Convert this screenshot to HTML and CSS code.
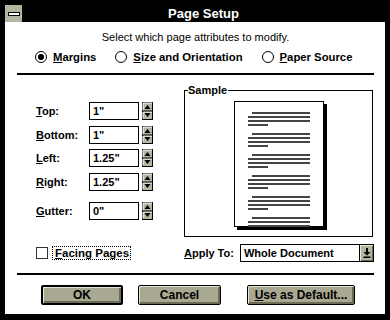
FILE: index.html
```html
<!DOCTYPE html>
<html>
<head>
<meta charset="utf-8">
<link rel="stylesheet" href="styles.css">
</head>
<body>
<div class="win">
  <div class="titlebar">
    <div class="sysmenu"><span class="sysbar"></span></div>
    <div class="title">Page Setup</div>
  </div>
  <div class="client">
    <p class="intro">Select which page attributes to modify.</p>
    <div class="radios">
      <div class="radio"><span class="circle on"></span><span><u>M</u>argins</span></div>
      <div class="radio"><span class="circle"></span><span><u>S</u>ize and Orientation</span></div>
      <div class="radio"><span class="circle"></span><span><u>P</u>aper Source</span></div>
    </div>
    <div class="rule"></div>
    <div class="main">
      <div class="fields">
        <div class="field"><span class="lbl"><u>T</u>op:</span><span class="box">1"</span><svg class="spin" width="11" height="18" viewBox="0 0 11 18"><rect x="0.5" y="0.5" width="10" height="17" fill="#b4b4a0" stroke="#000"/><path d="M1 8.5V1h9" fill="none" stroke="#fff"/><path d="M1 16.5V10h9" fill="none" stroke="#fff"/><line x1="0" y1="9" x2="11" y2="9" stroke="#000"/><path d="M5.5 3L8.5 7H2.5Z"/><path d="M2.5 11H8.5L5.5 15Z"/></svg></div>
        <div class="field"><span class="lbl"><u>B</u>ottom:</span><span class="box">1"</span><svg class="spin" width="11" height="18" viewBox="0 0 11 18"><rect x="0.5" y="0.5" width="10" height="17" fill="#b4b4a0" stroke="#000"/><path d="M1 8.5V1h9" fill="none" stroke="#fff"/><path d="M1 16.5V10h9" fill="none" stroke="#fff"/><line x1="0" y1="9" x2="11" y2="9" stroke="#000"/><path d="M5.5 3L8.5 7H2.5Z"/><path d="M2.5 11H8.5L5.5 15Z"/></svg></div>
        <div class="field"><span class="lbl"><u>L</u>eft:</span><span class="box">1.25"</span><svg class="spin" width="11" height="18" viewBox="0 0 11 18"><rect x="0.5" y="0.5" width="10" height="17" fill="#b4b4a0" stroke="#000"/><path d="M1 8.5V1h9" fill="none" stroke="#fff"/><path d="M1 16.5V10h9" fill="none" stroke="#fff"/><line x1="0" y1="9" x2="11" y2="9" stroke="#000"/><path d="M5.5 3L8.5 7H2.5Z"/><path d="M2.5 11H8.5L5.5 15Z"/></svg></div>
        <div class="field"><span class="lbl"><u>R</u>ight:</span><span class="box">1.25"</span><svg class="spin" width="11" height="18" viewBox="0 0 11 18"><rect x="0.5" y="0.5" width="10" height="17" fill="#b4b4a0" stroke="#000"/><path d="M1 8.5V1h9" fill="none" stroke="#fff"/><path d="M1 16.5V10h9" fill="none" stroke="#fff"/><line x1="0" y1="9" x2="11" y2="9" stroke="#000"/><path d="M5.5 3L8.5 7H2.5Z"/><path d="M2.5 11H8.5L5.5 15Z"/></svg></div>
        <div class="field gutter"><span class="lbl"><u>G</u>utter:</span><span class="box">0"</span><svg class="spin" width="11" height="18" viewBox="0 0 11 18"><rect x="0.5" y="0.5" width="10" height="17" fill="#b4b4a0" stroke="#000"/><path d="M1 8.5V1h9" fill="none" stroke="#fff"/><path d="M1 16.5V10h9" fill="none" stroke="#fff"/><line x1="0" y1="9" x2="11" y2="9" stroke="#000"/><path d="M5.5 3L8.5 7H2.5Z"/><path d="M2.5 11H8.5L5.5 15Z"/></svg></div>
      </div>
      <div class="sample">
        <span class="legend">Sample</span>
        <div class="page">
          <div class="grp"><div class="ln ind"></div><div class="ln"></div><div class="ln"></div><div class="ln short"></div></div>
          <div class="grp"><div class="ln ind"></div><div class="ln"></div><div class="ln"></div><div class="ln short"></div></div>
          <div class="grp"><div class="ln ind"></div><div class="ln"></div><div class="ln"></div><div class="ln short"></div></div>
          <div class="grp"><div class="ln ind"></div><div class="ln"></div><div class="ln"></div><div class="ln short"></div></div>
          <div class="grp"><div class="ln ind"></div><div class="ln"></div><div class="ln"></div><div class="ln short"></div></div>
          <div class="grp"><div class="ln ind"></div><div class="ln"></div><div class="ln"></div></div>
        </div>
      </div>
    </div>
    <div class="lower">
      <div class="check"><span class="cbox"></span><span class="focus"><u>F</u>acing Pages</span></div>
      <span class="applylbl"><u>A</u>pply To:</span>
      <div class="combo"><span class="val">Whole Document</span><span class="drop"><svg width="12" height="16" viewBox="0 0 12 16"><path d="M5 3h2v4h2.5L6 10.5 2.5 7H5Z"/><rect x="2.5" y="11.5" width="7" height="1.5"/></svg></span></div>
    </div>
    <div class="rule rule2"></div>
    <div class="buttons">
      <div class="btn def">OK</div>
      <div class="btn cancel">Cancel</div>
      <div class="btn wide"><span><u>U</u>se as Default...</span></div>
    </div>
  </div>
</div>
</body>
</html>
```

FILE: styles.css
```css
* { box-sizing: border-box; }
html, body { margin: 0; padding: 0; background: #000; }
body { font-family: "Liberation Sans", Arial, sans-serif; color: #000; }
u { text-decoration: underline; text-underline-offset: 1px; }

.win {
  width: 390px;
  height: 320px;
  background: #000;
  padding: 0 5px 6px 5px;
  display: flex;
  flex-direction: column;
}
.titlebar {
  height: 22px;
  padding-top: 5px;
  display: flex;
}
.sysmenu {
  width: 17px;
  height: 17px;
  background: #b4b4a0;
  display: flex;
  align-items: center;
  justify-content: center;
}
.sysbar {
  width: 12px;
  height: 4px;
  border: 1px solid #000;
  background: #fff;
}
.title {
  flex: 1;
  color: #fff;
  text-align: center;
  font-weight: bold;
  font-size: 13px;
  line-height: 17px;
}
.client {
  flex: 1;
  background: #fff;
  padding: 0 11px 0 12px;
  display: flex;
  flex-direction: column;
}
.intro {
  margin: 8px 0 0;
  text-align: center;
  font-size: 11px;
  line-height: 14px;
}
.radios {
  margin-top: 6px;
  height: 14px;
  display: flex;
  gap: 19px;
  padding-left: 18px;
  font-weight: bold;
  font-size: 11.3px;
}
.radio {
  display: flex;
  align-items: center;
  gap: 6px;
}
.circle {
  width: 12px;
  height: 12px;
  border: 1px solid #000;
  border-radius: 50%;
  background: #fff;
}
.circle.on {
  background: radial-gradient(circle, #000 0 2.8px, #fff 3.3px);
}
.rule {
  height: 2px;
  background: #000;
  margin-top: 9px;
}
.main {
  display: flex;
  height: 162px;
}
.fields {
  width: 167px;
  padding-top: 27px;
  padding-left: 19px;
  display: flex;
  flex-direction: column;
  gap: 5.5px;
}
.field {
  display: flex;
  align-items: center;
  height: 18px;
  font-weight: bold;
  font-size: 11px;
}
.field.gutter { margin-top: 6px; }
.lbl { width: 53px; }
.box {
  width: 50px;
  height: 18px;
  border: 1px solid #000;
  padding-left: 3px;
  line-height: 16px;
  margin-right: 3px;
}
.spin { display: block; }
.sample {
  position: relative;
  margin-top: 15px;
  width: 189px;
  height: 147px;
  border: 1px solid #000;
}
.legend {
  position: absolute;
  top: -8px;
  left: 3px;
  background: #fff;
  padding: 0 1px 0 0;
  font-weight: bold;
  font-size: 11px;
  line-height: 14px;
}
.page {
  width: 90px;
  height: 126px;
  margin: 10px auto 0;
  border: 1px solid #000;
  box-shadow: 3px 3px 0 #000;
  padding: 10px 13px 0;
  display: flex;
  flex-direction: column;
  gap: 7px;
}
.grp {
  display: flex;
  flex-direction: column;
  gap: 2px;
}
.ln {
  height: 2px;
  background: #444;
}
.ln.ind { margin-left: 4px; }
.ln.short { width: 20px; }
.lower {
  margin-top: 7px;
  height: 18px;
  display: flex;
  align-items: center;
  font-weight: bold;
  font-size: 11px;
}
.check {
  width: 167px;
  padding-left: 19px;
  display: flex;
  align-items: center;
  gap: 4px;
}
.cbox {
  width: 12px;
  height: 12px;
  border: 1px solid #333;
  background: #fff;
}
.focus {
  border: 1px dotted #000;
  padding: 0 1px 0 2px;
  line-height: 12px;
  font-size: 11.5px;
}
.applylbl { margin-right: 6px; }
.combo {
  flex: 1;
  height: 18px;
  border: 1px solid #000;
  display: flex;
}
.val {
  flex: 1;
  padding-left: 3px;
  line-height: 16px;
}
.drop {
  width: 14px;
  border-left: 1px solid #000;
  background: #b4b4a0;
  box-shadow: inset 1px 1px 0 #e8e8dc, inset -1px -1px 0 #6b6b58;
  display: flex;
  align-items: center;
  justify-content: center;
}
.drop svg { display: block; }
.rule2 { margin-top: 11px; }
.buttons {
  margin-top: 10px;
  display: flex;
  padding-left: 24px;
}
.btn {
  height: 20px;
  border: 1px solid #000;
  border-radius: 2px;
  background: #a9a992;
  box-shadow: inset 1px 1px 0 #e4e4d6, inset -2px -2px 0 #6b6b58;
  font-weight: bold;
  font-size: 12px;
  display: flex;
  align-items: center;
  justify-content: center;
}
.btn.def { width: 82px; border-width: 2px; }
.btn.cancel { width: 83px; margin-left: 15px; }
.btn.wide { width: 108px; margin-left: 26px; }
```
